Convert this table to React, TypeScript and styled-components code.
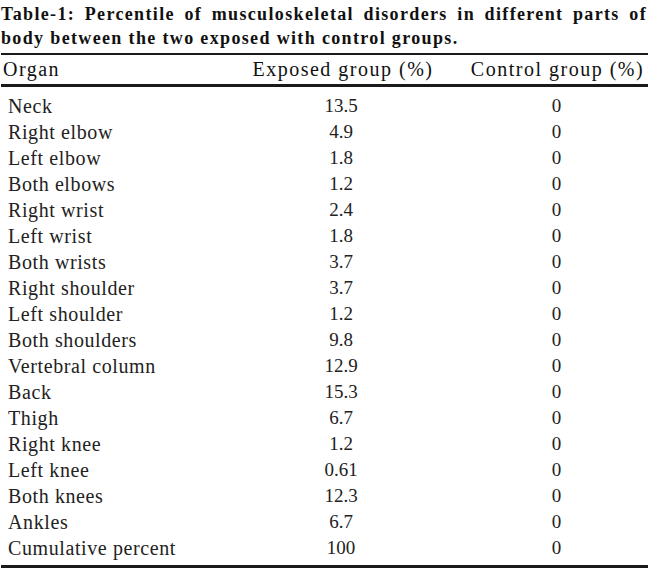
import * as React from "react";
import styled, { createGlobalStyle } from "styled-components";

interface IRow {
  organ: string;
  exposed: string;
  control: string;
}

const rows: IRow[] = [
  { organ: "Neck", exposed: "13.5", control: "0" },
  { organ: "Right elbow", exposed: "4.9", control: "0" },
  { organ: "Left elbow", exposed: "1.8", control: "0" },
  { organ: "Both elbows", exposed: "1.2", control: "0" },
  { organ: "Right wrist", exposed: "2.4", control: "0" },
  { organ: "Left wrist", exposed: "1.8", control: "0" },
  { organ: "Both wrists", exposed: "3.7", control: "0" },
  { organ: "Right shoulder", exposed: "3.7", control: "0" },
  { organ: "Left shoulder", exposed: "1.2", control: "0" },
  { organ: "Both shoulders", exposed: "9.8", control: "0" },
  { organ: "Vertebral column", exposed: "12.9", control: "0" },
  { organ: "Back", exposed: "15.3", control: "0" },
  { organ: "Thigh", exposed: "6.7", control: "0" },
  { organ: "Right knee", exposed: "1.2", control: "0" },
  { organ: "Left knee", exposed: "0.61", control: "0" },
  { organ: "Both knees", exposed: "12.3", control: "0" },
  { organ: "Ankles", exposed: "6.7", control: "0" },
  { organ: "Cumulative percent", exposed: "100", control: "0" },
];

const GlobalStyle = createGlobalStyle`
  html, body {
    margin: 0;
    padding: 0;
    background: #ffffff;
  }
  body {
    font-family: "Liberation Serif", "DejaVu Serif", serif;
    color: #111111;
  }
`;

const App = () => {
  return (
    <Page>
      <GlobalStyle />
      <Caption>
        <CaptionLine $full>
          Table-1: Percentile of musculoskeletal disorders in different parts of
        </CaptionLine>
        <CaptionLine>body between the two exposed with control groups.</CaptionLine>
      </Caption>
      <Table>
        <HeadRow>
          <HeadCell>Organ</HeadCell>
          <HeadCell $align="center">Exposed group (%)</HeadCell>
          <HeadCell $align="center" $shift>
            Control group (%)
          </HeadCell>
        </HeadRow>
        <Body>
          {rows.map((row) => (
            <Row key={row.organ}>
              <OrganCell>{row.organ}</OrganCell>
              <ValueCell>{row.exposed}</ValueCell>
              <ValueCell $shift>{row.control}</ValueCell>
            </Row>
          ))}
        </Body>
      </Table>
    </Page>
  );
};

const Page = styled.div`
  width: 650px;
  height: 580px;
  padding: 2px 0 0 1px;
  box-sizing: border-box;
  background: #ffffff;
`;

const Caption = styled.div`
  width: 646px;
  font-weight: bold;
  font-size: 18px;
  line-height: 24px;
  letter-spacing: 1.35px;
`;

const CaptionLine = styled.div<{ $full?: boolean }>`
  white-space: nowrap;
  text-align: ${(p) => (p.$full ? "justify" : "left")};
  text-align-last: ${(p) => (p.$full ? "justify" : "left")};
`;

const Table = styled.div`
  width: 647px;
  margin-top: 3px;
  border-top: 2px solid #1a1a1a;
  border-bottom: 3px solid #1a1a1a;
`;

const HeadRow = styled.div`
  display: grid;
  grid-template-columns: 240px 200px 1fr;
  height: 29px;
  align-items: center;
  border-bottom: 3px solid #1a1a1a;
`;

const Body = styled.div`
  padding: 6px 0 4px;
`;

const Row = styled.div`
  display: grid;
  grid-template-columns: 240px 200px 1fr;
  height: 26px;
  align-items: center;
`;

const HeadCell = styled.div<{ $align?: string; $shift?: boolean }>`
  font-size: 20px;
  padding-left: ${(p) => (p.$shift ? "26px" : p.$align ? "4px" : "2px")};
  text-align: ${(p) => p.$align || "left"};
  letter-spacing: 1.5px;
  white-space: nowrap;
`;

const OrganCell = styled.div`
  font-size: 20px;
  letter-spacing: 0.6px;
  padding-left: 7px;
  color: #222222;
  white-space: nowrap;
`;

const ValueCell = styled.div<{ $shift?: boolean }>`
  font-size: 19px;
  text-align: center;
  padding-left: ${(p) => (p.$shift ? "24px" : "0")};
  color: #222222;
`;

export default App;
